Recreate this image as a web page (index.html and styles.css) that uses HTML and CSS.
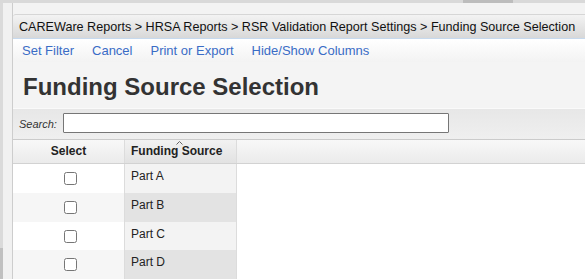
FILE: index.html
```html
<!DOCTYPE html>
<html lang="en">
<head>
    <meta charset="UTF-8">
    <title>Funding Source Selection</title>
    <link rel="stylesheet" href="styles.css">
</head>
<body>
    <div class="hscroll"><div class="hthumb"></div></div>
    <div class="layout">
        <div class="vscroll"></div>
        <div class="gutter"></div>
        <div class="main">
            <div class="breadcrumb">CAREWare Reports &gt; HRSA Reports &gt; RSR Validation Report Settings &gt; Funding Source Selection</div>
            <div class="actions">
                <a href="#">Set Filter</a>
                <a href="#">Cancel</a>
                <a href="#">Print or Export</a>
                <a href="#">Hide/Show Columns</a>
            </div>
            <h1>Funding Source Selection</h1>
            <div class="search">
                <label for="search">Search:</label>
                <input type="text" id="search">
            </div>
            <div class="grid-head">
                <div class="col-select">Select</div>
                <div class="col-source sorted">Funding Source<svg class="sort-arrow" width="7" height="4" viewBox="0 0 7 4"><polyline points="0.5,3.5 3.5,0.5 6.5,3.5" fill="none" stroke="#666" stroke-width="1"/></svg></div>
            </div>
            <div class="grid-body">
                <div class="row">
                    <div class="col-select"><input type="checkbox"></div>
                    <div class="col-source">Part A</div>
                </div>
                <div class="row alt">
                    <div class="col-select"><input type="checkbox"></div>
                    <div class="col-source">Part B</div>
                </div>
                <div class="row">
                    <div class="col-select"><input type="checkbox"></div>
                    <div class="col-source">Part C</div>
                </div>
                <div class="row alt">
                    <div class="col-select"><input type="checkbox"></div>
                    <div class="col-source">Part D</div>
                </div>
            </div>
        </div>
    </div>
</body>
</html>
```

FILE: styles.css
```css
body, html {
    margin: 0;
    padding: 0;
    height: 100%;
    font-family: "Liberation Sans", Arial, sans-serif;
    background-color: #f3f3f3;
    overflow: hidden;
}
.hscroll {
    height: 3px;
    background-color: #d9d9d9;
}
.hthumb {
    width: 50px;
    height: 3px;
    margin-left: 463px;
    background-color: #bdbdbd;
}
.layout {
    display: flex;
    height: calc(100% - 3px);
}
.vscroll {
    flex-shrink: 0;
    width: 3px;
    background: linear-gradient(#dadada 245px, #c0c0c0 245px);
}
.gutter {
    flex-shrink: 0;
    width: 9px;
    background-color: #f1f1f1;
    border-right: 1px solid #cdcdcd;
}
.main {
    flex: 1;
    min-width: 0;
    display: flex;
    flex-direction: column;
    margin-top: 11px;
    background-color: #f4f4f4;
}
.breadcrumb {
    height: 23px;
    line-height: 24px;
    padding-left: 6px;
    font-size: 12.6px;
    color: #111;
    white-space: nowrap;
    overflow: hidden;
    background: linear-gradient(#f3f3f3, #d8d8d8);
    border-top: 1px solid #d6d6d6;
    border-bottom: 1px solid #c6d9ee;
    border-top-left-radius: 3px;
}
.actions {
    height: 23px;
    display: flex;
    align-items: center;
    gap: 18px;
    padding-left: 9px;
    background: linear-gradient(#ffffff, #f3f3f3);
    border-bottom-left-radius: 6px;
}
.actions a {
    font-size: 13px;
    color: #3a6cc6;
    text-decoration: none;
}
h1 {
    margin: 0;
    height: 44px;
    line-height: 46px;
    padding: 2px 0 0 10px;
    font-size: 24px;
    color: #333;
}
.search {
    height: 31px;
    display: flex;
    align-items: center;
    padding-left: 6px;
    background: linear-gradient(#e7e7e7, #efefef);
    border-top: 1px solid #fafafa;
    border-bottom: 1px solid #cbcbcb;
}
.search label {
    font-size: 11px;
    font-style: italic;
    color: #333;
    margin-right: 6px;
}
.search input {
    width: 386px;
    height: 20px;
    margin-top: -2px;
    box-sizing: border-box;
    border: 1px solid #767676;
    border-radius: 1px;
    padding: 0 4px;
}
.grid-head {
    display: flex;
    height: 23px;
    background: linear-gradient(#f8f8f8, #ebebeb);
    border-bottom: 1px solid #d2d2d2;
}
.grid-head div {
    font-size: 12px;
    font-weight: bold;
    color: #222;
    line-height: 23px;
}
.col-select {
    width: 111px;
    text-align: center;
    border-right: 1px solid #dcdcdc;
}
.col-source {
    width: 105px;
    padding-left: 6px;
    border-right: 1px solid #dcdcdc;
}
.grid-head .sorted {
    position: relative;
    background: linear-gradient(#f2f2f2, #e2e2e2);
}
.sort-arrow {
    position: absolute;
    left: 51px;
    top: 1px;
}
.grid-body {
    flex: 1;
    background-color: #fff;
}
.row {
    display: flex;
    height: 28.7px;
}
.row .col-select {
    background-color: #fff;
    display: flex;
    justify-content: center;
    align-items: flex-start;
}
.row .col-source {
    background-color: #f3f3f3;
    font-size: 12px;
    color: #222;
    padding-top: 5px;
    box-sizing: border-box;
    width: 112px;
}
.row.alt .col-select {
    background-color: #f6f6f6;
}
.row.alt .col-source {
    background-color: #e3e3e3;
}
.row input {
    width: 13px;
    height: 13px;
    margin: 8px 0 0 3px;
}
```
